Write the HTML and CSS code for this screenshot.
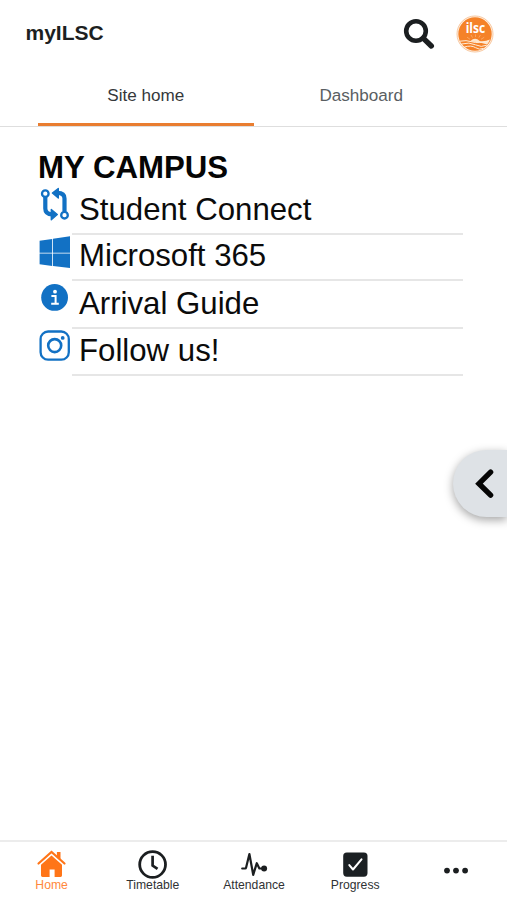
FILE: index.html
```html
<!DOCTYPE html>
<html lang="en">
<head>
<meta charset="utf-8">
<meta name="viewport" content="width=device-width, initial-scale=1">
<title>myILSC</title>
<link rel="stylesheet" href="styles.css">
</head>
<body>
<header class="topbar">
  <h1 class="brand">myILSC</h1>
  <svg class="search" viewBox="0 0 32 32" aria-label="Search"><circle cx="13" cy="13" r="9.8" fill="none" stroke="#1b1e20" stroke-width="4.6"/><path d="M20.4 20.4L28.3 28" stroke="#1b1e20" stroke-width="5.4" stroke-linecap="round"/></svg>
  <svg class="avatar" viewBox="0 0 38 38" aria-label="ilsc">
    <circle cx="19" cy="19" r="18" fill="#fff3e8" stroke="#f8c8a0" stroke-width="1"/>
    <circle cx="19" cy="19" r="16.7" fill="#f58228"/>
    <path d="M14.5 26q4.6-4.4 9.2 0q5 .8 10.3-1.4q-1 2.8-2.8 4.8q-8-3-17-3z" fill="#ffe6cc"/>
    <path d="M14 24.3l-3-2.2M16.5 22.6l-1.5-2.6M19.5 22v-2.6M22.8 22.6l1.6-2.6M25 24.3l3.2-2" stroke="#fbb478" stroke-width=".7"/>
    <path d="M4 26.2q6-1.4 12 .6t17-.8M5.4 29q8-2.2 14 .8t11.4.4M8.4 32q7-2 11 .6t8 .8" fill="none" stroke="#ffecd9" stroke-width="1"/>
    <text x="19.4" y="18" class="avatar-text" text-anchor="middle" textLength="19.5" lengthAdjust="spacingAndGlyphs">ilsc</text>
  </svg>
</header>
<nav class="tabs">
  <a class="tab active">Site home</a>
  <a class="tab">Dashboard</a>
</nav>
<main class="content">
  <h2 class="heading">MY CAMPUS</h2>
  <ul class="links">
    <li class="row">
      <svg class="icon" viewBox="0 0 34 36"><g fill="none" stroke="#1271c4" stroke-width="4.2"><path d="M7.3 10v11.5q0 5.8 7 5.8"/><path d="M26.5 24V11.5q0-5.6-7-5.6"/></g><g fill="#fff" stroke="#1271c4" stroke-width="2.3"><circle cx="7.3" cy="6.7" r="3.3"/><circle cx="26.5" cy="28.2" r="3.3"/></g><path d="M13.3 22.5l6 5-6 5.2zM20.3 1.5L14.4 6l5.9 5z" fill="#1271c4" stroke="#1271c4" stroke-width="1.4" stroke-linejoin="round"/></svg>
      <span class="label">Student Connect</span>
    </li>
    <li class="row">
      <svg class="icon" viewBox="0 0 34 36"><path d="M1.6 5.7L14.2 4v13.8H1.6zM15 3.8L32 1.3v16.5H15zM1.6 18.6h12.6V31L1.6 29.3zM15 18.6H32v14.5l-17-2.2z" fill="#1271c4"/></svg>
      <span class="label">Microsoft 365</span>
    </li>
    <li class="row">
      <svg class="icon" viewBox="0 0 34 36"><circle cx="16.6" cy="16.4" r="13.4" fill="#1271c4"/><circle cx="17" cy="10.7" r="1.9" fill="#fff"/><path d="M13.4 15h4.2v7.1M13.2 22.7h7.6" fill="none" stroke="#fff" stroke-width="2"/></svg>
      <span class="label">Arrival Guide</span>
    </li>
    <li class="row">
      <svg class="icon" viewBox="0 0 34 36"><g fill="none" stroke="#1271c4" stroke-width="2.3"><rect x="2.6" y="2.5" width="28.2" height="28.2" rx="7.5"/><circle cx="16.7" cy="16.6" r="6.5" stroke-width="2.6"/></g><circle cx="24.7" cy="8.9" r="1.9" fill="#1271c4"/></svg>
      <span class="label">Follow us!</span>
    </li>
  </ul>
</main>
<button class="drawer" aria-label="Open drawer"><svg class="chevron" viewBox="0 0 20 32"><path d="M15.6 4.2L4 15.7L15.6 27.2" fill="none" stroke="#050505" stroke-width="5.4" stroke-linecap="round"/></svg></button>
<footer class="bottom">
  <a class="item home"><svg class="nav-icon" viewBox="0 0 32 32"><path d="M2.5 15.5L15.5 4L28.5 15.5" fill="none" stroke="#ff7518" stroke-width="2.2" stroke-linecap="round"/><path d="M20.9 4h3.6v8l-3.6-3z" fill="#ff7518"/><path d="M5 16.8L15.5 7.6l10.5 9.2v10.8q0 1.4-1.4 1.4h-6v-7.6h-5V29H6.5q-1.5 0-1.5-1.4z" fill="#ff7518"/></svg><span class="caption">Home</span></a>
  <a class="item"><svg class="nav-icon" viewBox="0 0 32 32"><circle cx="15.6" cy="16.5" r="12.9" fill="none" stroke="#1b1e20" stroke-width="2.8"/><path d="M15.6 9.2v8.4l3.8 2.6" fill="none" stroke="#1b1e20" stroke-width="2.7" stroke-linecap="square"/></svg><span class="caption">Timetable</span></a>
  <a class="item"><svg class="nav-icon" viewBox="0 0 32 32"><path d="M4.2 20.5h2.9q.8 0 1-1L11.4 6l3.8 20.8 3.6-11.6 2.6 5.3H26" fill="none" stroke="#1b1e20" stroke-width="2.2" stroke-linecap="round" stroke-linejoin="round"/><circle cx="26.1" cy="20.4" r="3" fill="#1b1e20"/></svg><span class="caption">Attendance</span></a>
  <a class="item"><svg class="nav-icon" viewBox="0 0 32 32"><rect x="4.2" y="4.5" width="24.3" height="24.2" rx="3.6" fill="#1b2023"/><path d="M10.3 17.1l3.7 4.4 8.5-10.2" fill="none" stroke="#fff" stroke-width="2" stroke-linecap="round" stroke-linejoin="round"/></svg><span class="caption">Progress</span></a>
  <a class="item"><svg class="nav-icon" viewBox="0 0 32 32" aria-label="More"><g fill="#1b1e20"><circle cx="7" cy="22.6" r="2.9"/><circle cx="16" cy="22.6" r="2.9"/><circle cx="25.1" cy="22.6" r="2.9"/></g></svg></a>
</footer>
</body>
</html>
```
FILE: styles.css
```css
* { box-sizing: border-box; }
body {
  margin: 0;
  height: 900px;
  display: flex;
  flex-direction: column;
  overflow: hidden;
  background: #fff;
  color: #0b0b0b;
  font-family: "Liberation Sans", Arial, sans-serif;
}
.topbar {
  height: 67px;
  display: flex;
  align-items: center;
  padding: 0 13px 0 25.5px;
}
.brand { margin: 0 auto 0 0; padding-bottom: 2px; font-size: 21px; line-height: 24px; color: #1d1f21; }
.search { width: 32px; height: 32px; margin-right: 21.5px; }
.avatar { width: 38px; height: 38px; }
.avatar-text { font: bold 15px "Open Sans", sans-serif; fill: #fff; }
.tabs {
  height: 60px;
  display: flex;
  padding: 0 38px;
  border-bottom: 1px solid #dedede;
}
.tab {
  flex: 1;
  height: 59px;
  padding-top: 19px;
  font-size: 17.1px;
  line-height: 20px;
  text-align: center;
  color: #595e62;
}
.active { color: #35383b; border-bottom: 3px solid #e97d30; }
.content { flex: 1; padding: 24px 44px 0 38px; }
.heading { margin: 0; font-size: 31.2px; line-height: 34px; height: 36px; color: #050505; }
.links { margin: 0; padding: 0; list-style: none; display: grid; grid-template-rows: 47.5px 46.5px 47.5px 47.5px; }
.row { display: flex; }
.icon { width: 34px; height: 36px; flex: none; }
.label {
  flex: 1;
  display: flex;
  align-items: flex-end;
  padding: 0 0 5px 7px;
  border-bottom: 2px solid #e6e6e6;
  font-size: 31.2px;
  line-height: 36px;
}
.drawer {
  position: absolute;
  right: 0;
  top: 450px;
  width: 54px;
  height: 67px;
  padding: 0 12px 0 0;
  display: flex;
  align-items: center;
  justify-content: flex-end;
  border: 0;
  border-radius: 34px 0 0 34px;
  background: #dee2e6;
  box-shadow: 0 3px 10px rgba(0, 0, 0, .36);
}
.chevron { width: 20px; height: 32px; }
.bottom {
  height: 60px;
  display: grid;
  grid-template-columns: repeat(5, 1fr);
  border-top: 2px solid #ececec;
  padding: 6px 0 0 1px;
}
.item { display: flex; flex-direction: column; align-items: center; }
.nav-icon { width: 32px; height: 32px; flex: none; }
.caption { margin-top: -2px; font-size: 12.2px; line-height: 14px; color: #303234; }
.home .caption { color: #ff873c; }
```
